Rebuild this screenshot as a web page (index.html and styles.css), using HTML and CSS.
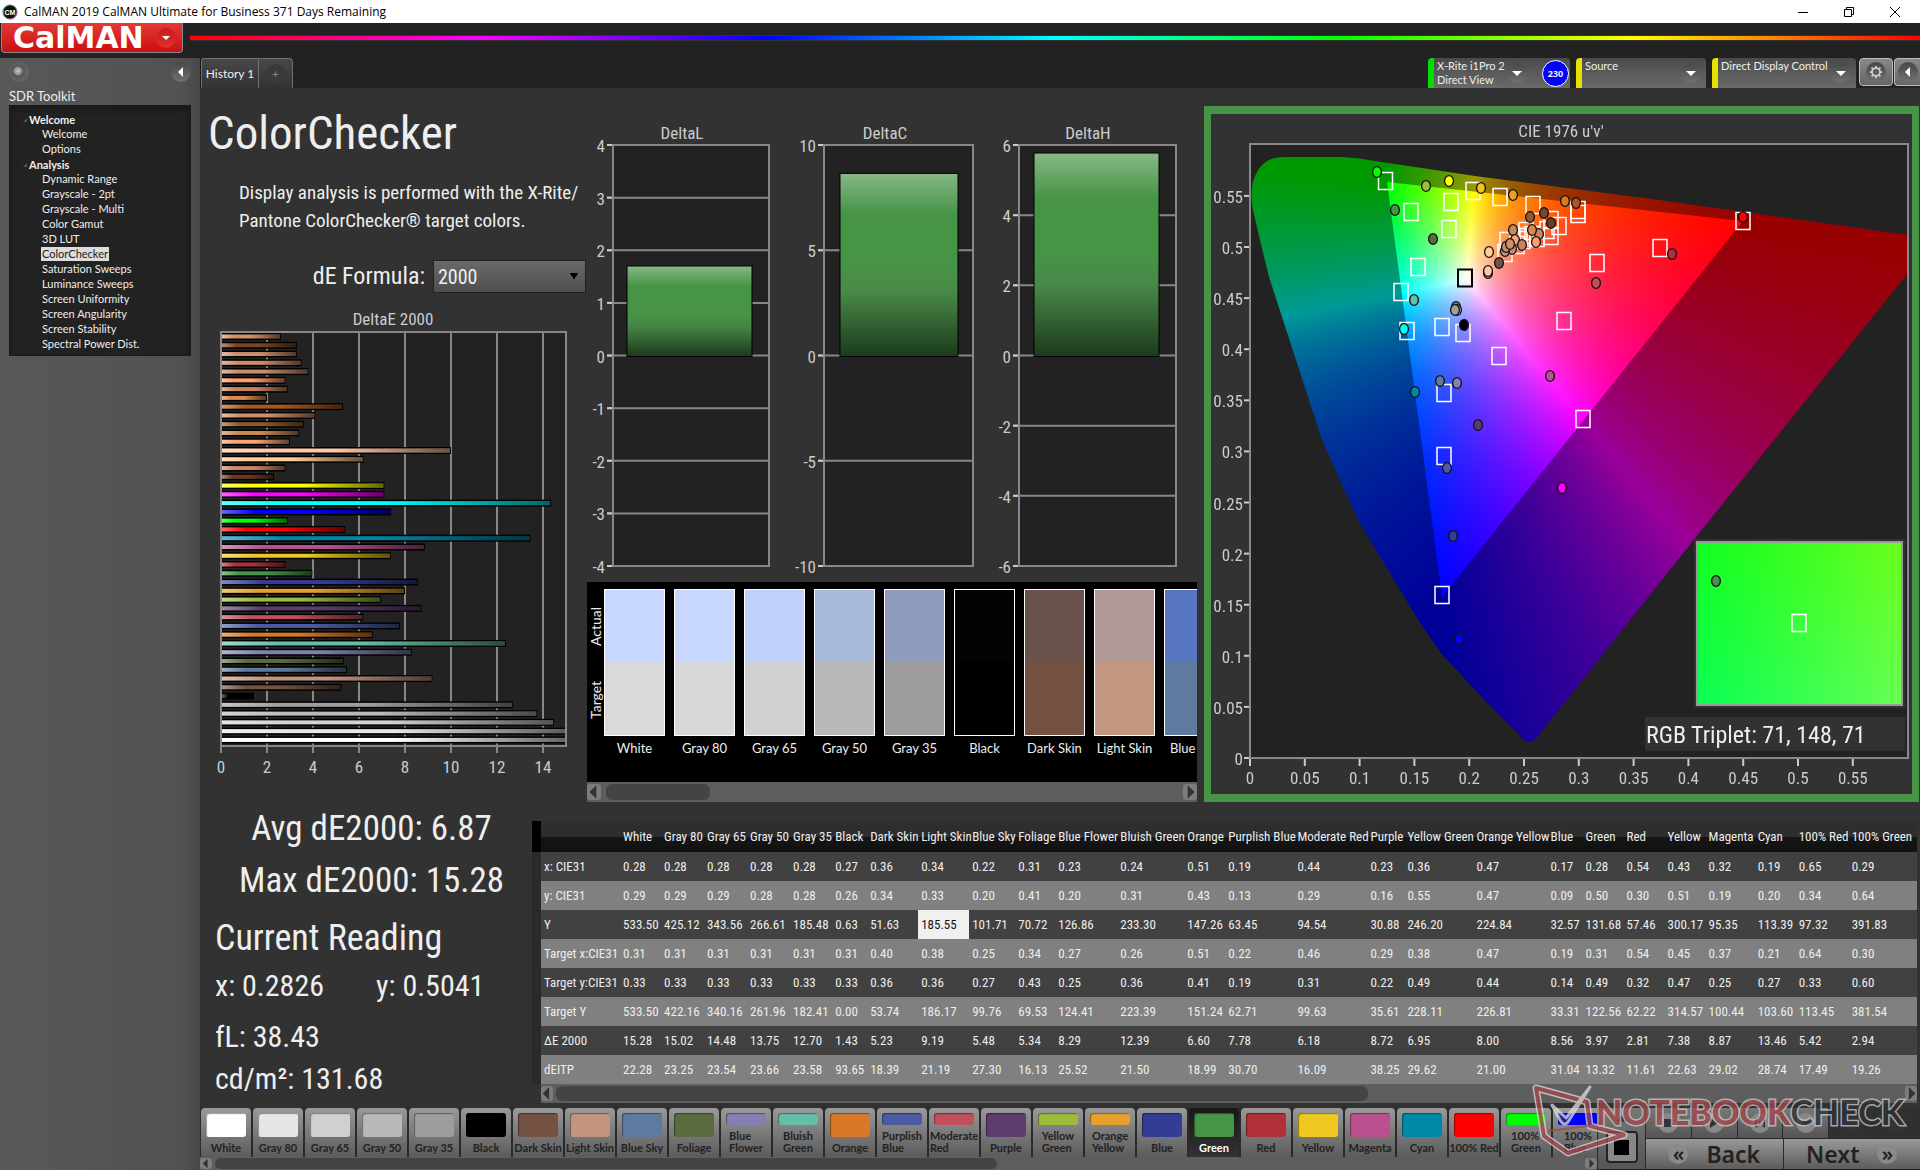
FILE: index.html
```html
<!DOCTYPE html>
<html lang="en">
<head>
<meta charset="utf-8">
<title>CalMAN 2019</title>
<link rel="stylesheet" href="styles.css">
</head>
<body>
<header class="titlebar">
  <svg class="app-icon" viewBox="0 0 16 16"><circle cx="8" cy="8" r="7" fill="#111" stroke="#5a7a6a" stroke-width="1"/><path d="M1 8a7 7 0 0 1 5-6.700" stroke="#3c9" fill="none"/><path d="M15 8a7 7 0 0 1-7 7" stroke="#c4c" fill="none"/><text x="8" y="11" text-anchor="middle" font-size="7" font-weight="700" fill="#fff">CM</text></svg>
  <span class="titlebar-text">CalMAN 2019 CalMAN Ultimate for Business 371 Days Remaining</span>
  <button class="win" aria-label="Minimize"><svg viewBox="0 0 12 12"><path d="M1 6.500h10" /></svg></button>
  <button class="win" aria-label="Restore"><svg viewBox="0 0 12 12"><path d="M1.500 3.500h7v7h-7zM3.500 3v-1.500h7v7h-2"/></svg></button>
  <button class="win" aria-label="Close"><svg viewBox="0 0 12 12"><path d="M1 1l10 10M11 1l-10 10"/></svg></button>
</header>
<div class="brandbar">
  <button class="brand"><span>CalMAN</span><i class="knob red"><svg viewBox="0 0 10 10"><path d="M1 3h8l-4 4z"/></svg></i></button>
  <div class="rainbow"></div>
</div>
<div class="shell">
  <aside class="sidebar">
    <div class="side-top"><i class="knob dot"></i><button class="knob" aria-label="Collapse"><svg viewBox="0 0 10 10"><path d="M7 0v10l-5-5z"/></svg></button></div>
    <h2>SDR Toolkit</h2>
    <nav class="tree">
      <h3>Welcome</h3>
      <a href="#">Welcome</a><a href="#">Options</a>
      <h3>Analysis</h3>
      <a href="#">Dynamic Range</a><a href="#">Grayscale - 2pt</a><a href="#">Grayscale - Multi</a><a href="#">Color Gamut</a><a href="#">3D LUT</a><a href="#" class="on">ColorChecker</a><a href="#">Saturation Sweeps</a><a href="#">Luminance Sweeps</a><a href="#">Screen Uniformity</a><a href="#">Screen Angularity</a><a href="#">Screen Stability</a><a href="#">Spectral Power Dist.</a>
    </nav>
  </aside>
  <main class="main">
    <div class="tabbar">
      <button class="tab">History 1</button><button class="tab add"><i class="knob">+</i></button>
      <div class="devices">
        <button class="device meter"><span>X-Rite i1Pro 2<br>Direct View</span><i class="knob"><svg viewBox="0 0 10 10"><path d="M0 3h10l-5 5z"/></svg></i><b class="badge">230</b></button>
        <button class="device"><span>Source</span><i class="knob"><svg viewBox="0 0 10 10"><path d="M0 3h10l-5 5z"/></svg></i></button>
        <button class="device"><span>Direct Display Control</span><i class="knob"><svg viewBox="0 0 10 10"><path d="M0 3h10l-5 5z"/></svg></i></button>
        <button class="tool" aria-label="Settings"><i class="knob"><svg class="gear" viewBox="0 0 16 16"><circle cx="8" cy="8" r="4.500" fill="none" stroke="#ccc" stroke-width="2"/><path d="M8 1v3M8 12v3M1 8h3M12 8h3M3 3l2 2M11 11l2 2M13 3l-2 2M5 11l-2 2" stroke="#ccc" stroke-width="2"/></svg></i></button>
        <button class="tool last" aria-label="Collapse"><i class="knob"><svg viewBox="0 0 10 10"><path d="M7 0v10l-5-5z"/></svg></i></button>
      </div>
    </div>
    <div class="charts">
      <section class="intro">
        <h1>ColorChecker</h1>
        <p>Display analysis is performed with the X-Rite/<br>Pantone ColorChecker® target colors.</p>
        <div class="formula"><label for="formula">dE Formula:</label><select id="formula"><option>2000</option></select></div>
        <svg class="bars" id="deltaE" viewBox="0 0 378 476"></svg>
      </section>
      <section class="deltas">
        <div class="delta-row"><svg id="deltaL" viewBox="0 0 190 470"></svg><svg id="deltaC" viewBox="0 0 207 470"></svg><svg id="deltaH" viewBox="0 0 213 470"></svg></div>
        <div class="compare">
          <div class="compare-body"><div class="sides"><span>Actual</span><span>Target</span></div><div class="swatches" id="swatches"></div></div>
          <div class="scroll big"><button aria-label="Left"><svg viewBox="0 0 10 14"><path d="M7 1v12l-6-6z"/></svg></button><i class="thumb t1"></i><button aria-label="Right"><svg viewBox="0 0 10 14"><path d="M3 1v12l6-6z"/></svg></button></div>
        </div>
      </section>
      <section class="cie"><canvas id="gamut" width="701" height="680"></canvas><svg id="cie" viewBox="0 0 701 680"></svg></section>
    </div>
    <div class="results">
      <section class="scores">
        <p class="avg">Avg dE2000: 6.87</p><p class="avg">Max dE2000: 15.28</p>
        <h2>Current Reading</h2>
        <p class="xy"><span>x: 0.2826</span><span>y: 0.5041</span></p><p class="fl">fL: 38.43</p><p class="cd">cd/m²: 131.68</p>
      </section>
      <section class="grid">
        <div class="strip"></div>
        <div class="grid-body"><div class="clip"><table id="data"></table></div>
        <div class="scroll"><button aria-label="Left"><svg viewBox="0 0 10 14"><path d="M7 1v12l-6-6z"/></svg></button><i class="thumb t2"></i><button aria-label="Right"><svg viewBox="0 0 10 14"><path d="M3 1v12l6-6z"/></svg></button></div></div>
      </section>
    </div>
    <footer class="footer">
      <div class="patches"><div class="patch-row" id="patches"></div>
      <div class="scroll thin"><button aria-label="Left"><svg viewBox="0 0 10 14"><path d="M7 1v12l-6-6z"/></svg></button><i class="thumb t3"></i><button aria-label="Right"><svg viewBox="0 0 10 14"><path d="M3 1v12l6-6z"/></svg></button></div></div>
      <div class="pattern"><button aria-label="Up"><svg viewBox="0 0 10 10"><path d="M0 7h10l-5-5z"/></svg></button><button class="window" aria-label="Pattern window"><i></i></button></div>
      <div class="control">
        <div class="transport">
          <button aria-label="Stop"><i class="knob"><svg viewBox="0 0 10 10"><path d="M1 1h8v8h-8z"/></svg></i></button>
          <button aria-label="Play"><i class="knob"><svg viewBox="0 0 10 10"><path d="M1 0v10l8-5z"/></svg></i></button>
          <button aria-label="Read series"><i class="knob"><svg viewBox="0 0 12 10"><path d="M0 0h3v2h-1v6h1v2h-3zM12 0h-3v2h1v6h-1v2h3zM4 1v8l4-4z"/></svg></i></button>
          <button aria-label="Continuous"><i class="knob"><svg viewBox="0 0 12 10"><path d="M3 3a2 2 0 1 0 0 4c2 0 4-4 6-4a2 2 0 1 1 0 4c-2 0-4-4-6-4z" fill="none" stroke="#333" stroke-width="1.500"/></svg></i></button>
          <button class="off" aria-label="Refresh"><i class="knob"></i></button><button class="off" aria-label="More"><i class="knob"></i></button>
        </div>
        <div class="nav"><button><i class="knob">«</i>Back</button><button>Next<i class="knob">»</i></button></div>
      </div>
      <svg class="watermark" viewBox="0 0 400 95">
        <g stroke-linejoin="round" fill="none"><path d="M16 14L67 28L70 52L104 61L48 79L24 62Z" stroke="#ddd" stroke-width="7"/><path d="M16 14L67 28L70 52L104 61L48 79L24 62Z" stroke="#a8474c" stroke-width="4"/><path d="M32 31L46 44L70 13L48 48Q44 53 40 46Z" stroke="#ddd" stroke-width="3" fill="#333"/><path d="M28 57L68 52" stroke="#a8474c" stroke-width="2"/></g>
        <text x="76" y="51"><tspan fill="#a5454b">NOTEBOOK</tspan><tspan fill="#303030" class="check">CHECK</tspan></text>
      </svg>
    </footer>
  </main>
</div>
<script src="script.js"></script>
</body>
</html>
```
FILE: styles.css
```css
* { box-sizing: border-box; margin: 0; padding: 0; }
:root { --ui: Lato, "Liberation Sans", sans-serif; --narrow: "Roboto Condensed", Carlito, Lato, sans-serif; }
body { display: flex; flex-direction: column; min-height: 100vh; background: #222; color: #eee; font: 12px/14px var(--ui); overflow-x: hidden; }
button { border: 0; background: none; color: inherit; font: inherit; }
i { font-style: normal; }
svg { display: block; }
a { color: inherit; text-decoration: none; }

.titlebar { display: flex; align-items: center; height: 23px; padding: 0 2px; background: #fff; color: #000; }
.app-icon { width: 16px; height: 16px; margin-right: 6px; font-family: "Liberation Sans", sans-serif; }
.titlebar-text { flex: 1; font: 12px/16px "Open Sans", sans-serif; }
.win { width: 46px; height: 20px; display: grid; place-items: center; }
.win svg { width: 12px; height: 12px; fill: none; stroke: #000; }

.brandbar { display: flex; height: 35px; padding-left: 1px; gap: 7px; }
.brand { width: 182px; height: 30px; display: flex; align-items: center; justify-content: space-between; padding: 0 6px 0 11px; background: linear-gradient(#e23b36, #c90f10); border: 1px solid #888; border-top: 0; border-radius: 0 0 4px 4px; color: #fff; font: bold 30px/30px "DejaVu Sans", sans-serif; }
.rainbow { flex: 1; height: 6px; margin-top: 12px; border: solid #333; border-width: 1px 0; background: linear-gradient(90deg, #f00, #f0f, #00f, #0ff, #0f0, #ff0, #f00); }

.knob { display: grid; place-items: center; flex: none; width: 20px; height: 20px; border-radius: 50%; background: linear-gradient(#484848, #707070); }
.knob svg { width: 10px; height: 10px; fill: #fff; }
.knob.red { background: linear-gradient(#c81a1a, #e03030); }
.knob.dot { background: radial-gradient(circle at 9px 9px, #ccc 0, #888 4px, #555 5px, #666 10px); }

.shell { display: flex; flex: 1; }
.sidebar { width: 200px; flex: none; padding: 4px 9px; background: linear-gradient(90deg, #585858, #525252 90%, #484848); }
.side-top { display: flex; justify-content: space-between; height: 26px; }
.sidebar h2 { font: 13px/16px var(--ui); margin-bottom: 1px; }
.tree { height: 251px; padding: 6px 0 0 19px; background: #222; border: 1px solid #1a1a1a; font-size: 11px; line-height: 15px; box-shadow: inset 0 4px 6px #191919; }
.tree h3 { position: relative; font: bold 11px/15px var(--ui); }
.tree h3::before { content: ""; position: absolute; left: -10px; top: 6px; border: solid transparent; border-width: 4px 0 0 4px; border-bottom: 0; border-right: 4px solid #555; }
.tree a { display: block; width: max-content; margin-left: 12px; padding: 0 1px; line-height: 14px; margin-bottom: 1px; }
.tree .on { background: #ddd; color: #222; }

.main { position: relative; flex: 1; min-width: 0; display: flex; flex-direction: column; background: #323232; }
.tabbar { display: flex; height: 30px; background: #222; border-left: 1px solid #1a1a1a; }
.tab { width: 58px; background: linear-gradient(#484848, #333); border: 1px solid #707070; border-bottom: 0; border-radius: 3px 0 0 0; font-size: 12px; }
.tab.add { width: 34px; display: grid; place-items: center; border-left: 0; border-radius: 0 4px 0 0; }
.tab .knob { background: #3a3a3a; color: #888; }
.devices { display: flex; margin-left: auto; font-size: 11px; }
.device { display: flex; align-items: center; width: 130px; margin-right: 6px; padding: 0 5px 0 3px; border-left: 6px solid #e8e000; border-radius: 4px 4px 0 0; background: linear-gradient(#4a4a4a, #6a6a6a); text-align: left; }
.device:nth-child(3) { width: 144px; margin-right: 3px; }
.device span { flex: 1; align-self: flex-start; padding-top: 1px; white-space: nowrap; }
.device.meter { width: 142px; border-left-color: #0d0; padding-right: 1px; }
.badge { width: 27px; height: 27px; margin-left: 15px; border: 1px solid #fff; border-radius: 50%; background: #00f; font: bold 9px/25px "Open Sans", sans-serif; text-align: center; }
.tool { width: 34px; height: 28px; display: grid; place-items: center; border: 1px solid #bbb; border-radius: 4px; background: linear-gradient(#888, #666); margin-right: 1px; }
.tool.last { width: 26px; margin: 0; border-right: 0; border-radius: 4px 0 0 4px; }
.knob .gear { width: 14px; height: 14px; }

.charts { display: grid; grid-template-columns: 387px 617fr 715fr; padding-right: 1px; height: 714px; }
.intro { padding: 19px 0 0 8px; }
.intro h1 { font: 47px/52px var(--narrow); }
.intro p { margin: 20px 0 0 31px; font: 19px/28px var(--narrow); white-space: nowrap; }
.formula { display: flex; justify-content: flex-end; gap: 8px; margin: 25px 1px 16px 0; font: 24px/33px var(--narrow); }
.formula select { appearance: none; width: 153px; height: 33px; padding-left: 4px; border: 1px solid #222; color: #eee; font: 20px/30px var(--narrow); background: conic-gradient(from -30deg at 50% 100%, #000 60deg, transparent 0) 136px 12px / 8px 7px no-repeat, linear-gradient(#6a6a6a, #4e4e4e); }
.bars { width: 378px; height: 476px; margin-left: 1px; }
.deltas { padding-top: 24px; margin-right: 7px; min-width: 0; }
.delta-row { display: grid; grid-template-columns: 190fr 207fr 213fr; height: 470px; }
.delta-row svg { width: 100%; height: 470px; }
.charts svg text { font-family: var(--narrow); }
.compare { height: 220px; background: #000; }
.compare-body { display: flex; height: 200px; overflow: hidden; }
.sides { width: 17px; flex: none; display: flex; flex-direction: column; padding-top: 7px; }
.sides span { height: 74px; writing-mode: vertical-rl; transform: rotate(180deg); text-align: center; font: 14px/17px var(--ui); }
.swatches { display: flex; gap: 9px; padding-top: 7px; overflow: hidden; }
.swatch { flex: none; width: 61px; white-space: nowrap; text-align: center; font: 13px/24px var(--ui); }
.swatch i { display: block; height: 147px; border: 1px solid #fff; }

.scroll { display: flex; align-items: stretch; height: 19px; padding: 2px 0; background: #5e5e5e; }
.scroll.big { height: 20px; }
.scroll.thin { height: 13px; padding: 1px 0; }
.scroll button { flex: none; width: 12px; border-radius: 3px; background: #7c7c7c; }
.scroll button:last-child { margin-left: auto; }
.scroll.big button { width: 14px; }
.scroll svg { width: 100%; height: 100%; fill: #333; }
.thumb { display: block; margin-left: 3px; border-radius: 6px; background: #444; }
.t1 { width: 17%; margin-left: 5px; }
.t2 { width: 59%; }
.t3 { width: 56%; }

.cie { display: grid; margin-top: 18px; height: 696px; border: solid #479447; border-width: 8px 7px; }
.cie canvas, .cie svg { grid-area: 1 / 1; width: 100%; height: 680px; }

.results { display: flex; height: 306px; }
.scores { width: 332px; flex: none; font-family: var(--narrow); }
.scores .avg { font-size: 35px; line-height: 51px; padding: 1px 0 0 11px; text-align: center; }
.scores h2 { font-size: 36px; font-weight: 400; line-height: 48px; margin: 8px 0 0 15px; }
.scores .xy { display: flex; gap: 52px; line-height: 50px; }
.scores .xy, .scores .fl, .scores .cd { padding-left: 15px; font-size: 30px; line-height: 48px; }
.scores .fl { margin-top: 3px; }
.scores .cd { line-height: 36px; }
.grid { flex: 1; min-width: 0; display: flex; padding: 19px 3px 4px 0; }
.strip { width: 9px; background: linear-gradient(#000 31px, #2a2a2a 31px); height: 263px; }
.grid-body { flex: 1; min-width: 0; }
.clip { overflow: hidden; }
table { table-layout: fixed; border-collapse: collapse; width: 1421px; font: 13px/20px var(--narrow); }
th { font-weight: 400; text-align: left; height: 31px; white-space: nowrap; }
thead tr { background: linear-gradient(#2e2e2e 50%, #161616 50%, #111); }
tbody th, td { height: 29px; white-space: nowrap; }
th, td { padding: 0 0 0 3px; }
tbody tr { background: #414141; }
tbody tr:nth-child(even) { background: #808080; }
.sel { background: #f0f0f0; color: #111; }

.footer { position: relative; display: flex; height: 62px; border-bottom: 1px solid #222; background: #2a2a2a; }
.patches { flex: 1; min-width: 0; }
.patch-row { display: flex; gap: 2px; height: 49px; padding-left: 1px; overflow: hidden; }
.patch { flex: none; width: 50px; display: flex; flex-direction: column; align-items: center; padding-top: 5px; border-radius: 4px 4px 0 0; background: linear-gradient(#999, #5c5c5c); color: #222; font: bold 11px/12px var(--ui); text-align: left; white-space: nowrap; }
.patch i { flex: 1; width: 40px; margin-bottom: 5px; border-radius: 3px; box-shadow: inset 1px 1px 1px #0006; }
.patch span { margin-bottom: 3px; }
.patch.on { background: linear-gradient(#181818, #333); color: #fff; }
.pattern { width: 47px; margin: 0 1px; background: linear-gradient(#777, #555); display: flex; flex-direction: column; align-items: center; gap: 6px; }
.pattern button svg { width: 12px; height: 12px; fill: #333; margin-top: 5px; }
.pattern .window { width: 32px; height: 32px; display: grid; place-items: center; border: 2px solid #222; border-radius: 4px; background: #888; }
.window i { width: 15px; height: 15px; background: #000; }
.control { width: 274px; }
.transport, .nav { display: flex; gap: 1px; height: 30px; }
.transport button { flex: 1; display: grid; place-items: center; background: linear-gradient(#777, #555); }
.transport .off { background: #303030; }
.transport .off .knob { background: #333; }
.transport .knob { background: #888; }
.transport .knob svg { fill: #333; }
.nav { margin-top: 1px; }
.nav button { flex: 1; display: flex; align-items: center; justify-content: center; gap: 18px; background: linear-gradient(#999, #5c5c5c); color: #222; font: 600 23px/30px "Noto Sans", sans-serif; }
.nav .knob { background: #8a8a8a; font-size: 20px; line-height: 16px; }
.watermark { position: absolute; right: 0; bottom: 0; width: 400px; height: 95px; opacity: .75; }
.watermark text { font: 900 34px Lato, sans-serif; stroke: #ccc; stroke-width: 3px; paint-order: stroke; }
.watermark .check { font-weight: 700; }
```
FILE: script.js
```js
const NS = 'http://www.w3.org/2000/svg';
const $ = id => document.getElementById(id);
function add(svg, tag, attrs, text) {
  const e = document.createElementNS(NS, tag);
  for (const k in attrs) e.setAttribute(k, attrs[k]);
  if (text !== undefined) e.textContent = text;
  svg.appendChild(e);
  return e;
}
const line = (s, x1, y1, x2, y2, c, w) => add(s, 'path', { d: `M${x1} ${y1}L${x2} ${y2}`, stroke: c, 'stroke-width': w || 2 });
const label = (s, x, y, t, anchor, size) => add(s, 'text', { x, y, 'text-anchor': anchor || 'middle', 'font-size': size || 17, fill: '#ccc' }, t);
function gradient(svg, id, vertical, stops) {
  const g = add(svg, 'linearGradient', vertical ? { id, x1: 0, y1: 0, x2: 0, y2: 1 } : { id });
  stops.forEach(([o, c, a]) => add(g, 'stop', { offset: o, 'stop-color': c, 'stop-opacity': a }));
}

// DeltaE 2000 per patch, top to bottom
const deltaE = [[2.6,'#d98f62'],[3.3,'#7a4524'],[3.3,'#cf8f6b'],[3.5,'#cd8c6a'],[3.8,'#c58e6c'],[2.8,'#ff9c72'],[2.9,'#cc8466'],[2,'#d98850'],[5.3,'#a9571f'],[4.1,'#cf8f6e'],[3.6,'#8f5a30'],[3.4,'#c98a58'],[3,'#f7a478'],[10,'#ffc7a8'],[6.2,'#ffcb98'],[2.8,'#cc8664'],[2.3,'#6f3a22'],[7.1,'#ffff00'],[7.1,'#ff00ff'],[14.35,'#00ffff'],[7.4,'#0000ff'],[2.9,'#00ff00'],[5.4,'#ff0000'],[13.46,'#0088a8'],[8.87,'#bb5090'],[7.38,'#eec81f'],[2.81,'#af303a'],[3.97,'#479447'],[8.56,'#343c96'],[8,'#e6a02c'],[6.95,'#9dbc3c'],[8.72,'#5d3d6c'],[6.18,'#c2505c'],[7.78,'#4a5ba4'],[6.6,'#d87828'],[12.39,'#66bda8'],[8.29,'#8480b4'],[5.34,'#5a6b40'],[5.48,'#5e7a9c'],[9.19,'#c39580'],[5.23,'#735242'],[1.43,'#000000'],[12.7,'#9e9e9e'],[13.75,'#bababa'],[14.48,'#d2d2d2'],[15,'#e8e8e8'],[15,'#ffffff']];
(function () {
  const s = $('deltaE'), x0 = 12, y0 = 23, w = 345, h = 414;
  gradient(s, 'shine', false, [[0, '#fff', .4], [.2, '#fff', 0], [.5, '#000', 0], [1, '#000', .6]]);
  label(s, 184, 16, 'DeltaE 2000');
  add(s, 'rect', { x: x0, y: y0, width: w, height: h, fill: '#222' });
  for (let v = 0; v < 15; v += 2) {
    const x = x0 + v * 23;
    line(s, x, y0, x, y0 + h + 7, '#888');
    label(s, x, y0 + h + 27, v);
  }
  deltaE.forEach(([v, c], i) => {
    const y = y0 + 1 + i * 8.77, bw = v * 23;
    add(s, 'rect', { x: x0, y, width: bw, height: 7, fill: '#000' });
    add(s, 'rect', { x: x0 + 1, y: y + 1.5, width: bw - 2, height: 4, fill: c });
    add(s, 'rect', { x: x0 + 1, y: y + 1.5, width: bw - 2, height: 4, fill: 'url(#shine)' });
  });
  add(s, 'rect', { x: x0, y: y0, width: w, height: h, fill: 'none', stroke: '#888', 'stroke-width': 2 });
})();

function delta(id, title, x0, x1, tx, max, step, value, bx, bw) {
  const s = $(id), y0 = 33, h = 421, mid = y0 + h / 2 + 1;
  gradient(s, id + 'g', true, [[0, '#86b886', 1], [.22, '#479447', 1], [.5, '#479447', 1], [.65, '#488848', 1], [1, '#1c3a1c', 1]]);
  label(s, tx, 27, title);
  add(s, 'rect', { x: x0, y: y0, width: x1 - x0, height: h, fill: '#222' });
  for (let v = max; v >= -max; v -= step) {
    const y = y0 + (max - v) * h / (2 * max);
    line(s, x0 - 6, y, x1, y, '#888');
    line(s, x0 - 6, y, x0, y, '#ccc');
    label(s, x0 - 8, y + 7, v, 'end');
  }
  const top = mid - value / max * h / 2;
  add(s, 'rect', { x: bx, y: top, width: bw, height: mid - top, fill: `url(#${id}g)`, stroke: '#000' });
  add(s, 'rect', { x: x0, y: y0, width: x1 - x0, height: h, fill: 'none', stroke: '#888', 'stroke-width': 2 });
}
delta('deltaL', 'DeltaL', 26, 182, 95, 4, 1, 1.72, 40, 125);
delta('deltaC', 'DeltaC', 47, 196, 108, 10, 5, 8.7, 63, 118);
delta('deltaH', 'DeltaH', 35, 192, 104, 6, 2, 5.8, 50, 125);

[['White','#c8d7ff','#d9d9d9'],['Gray 80','#c8d7ff','#d8d8d8'],['Gray 65','#c1d0fa','#d0d0d0'],['Gray 50','#a9b9dc','#b9b9b9'],['Gray 35','#909cbc','#9d9d9d'],['Black','#030305','#000'],['Dark Skin','#69524c','#735242'],['Light Skin','#b39898','#c39680'],['Blue Sky','#5676c0','#5e7a9e']].forEach(([n, a, t]) => {
  $('swatches').insertAdjacentHTML('beforeend', `<div class="swatch"><i style="background:linear-gradient(${a} 50%,${t} 50%)"></i>${n}</div>`);
});

// CIE 1976 u'v' diagram; marker positions are in plot pixels
function rgbAt(u, v) {
  const d = 6 * u - 16 * v + 12, x = 9 * u / d, y = 4 * v / d;
  const X = x / y, Z = (1 - x - y) / y;
  let c = [3.2406 * X - 1.5372 - .4986 * Z, -.9689 * X + 1.8758 + .0415 * Z, .0557 * X - .204 + 1.057 * Z].map(n => Math.max(0, n));
  const m = Math.max(...c);
  return c.map(n => n / m * 255);
}
const PX = 39, PY = 30, PW = 658, PH = 614;
function shade(ctx, x, y, w, h, map, gain) {
  const off = document.createElement('canvas');
  off.width = w; off.height = h;
  const o = off.getContext('2d'), img = o.createImageData(w, h);
  for (let j = 0, k = 0; j < h; j++) for (let i = 0; i < w; i++, k += 4) {
    const c = rgbAt(...map(i, j));
    img.data[k] = c[0] * gain; img.data[k + 1] = c[1] * gain; img.data[k + 2] = c[2] * gain; img.data[k + 3] = 255;
  }
  o.putImageData(img, 0, 0);
  ctx.drawImage(off, x, y);
}
(function () {
  const ctx = $('gamut').getContext('2d');
  ctx.fillStyle = '#323232'; ctx.fillRect(0, 0, 701, 680);
  ctx.fillStyle = '#222'; ctx.fillRect(PX, PY, PW, PH);
  const uv = (i, j) => [i / 1095, Math.max(.001, (PH - j) / 1022)];
  const locus = new Path2D('M279 598Q274 598 269 590Q246 569 225 546L191 509Q170 480 152 449Q128 410 108 376L72 296L46 216L33 176L19 133L10 96L3 66Q0 50 3 38Q10 13 33 13L92 13Q110 14 125 17L225 32L409 56L658 91L658 129L508 316L446 393L288 592Q284 598 279 598Z');
  const tri = new Path2D('M493 77L137 38L192 453Z');
  ctx.save(); ctx.translate(PX, PY); ctx.clip(locus); shade(ctx, 0, 0, PW, PH, uv, .6); ctx.restore();
  ctx.save(); ctx.translate(PX, PY); ctx.clip(tri); shade(ctx, 0, 0, PW, PH, uv, 1); ctx.restore();
  ctx.fillStyle = '#323232'; ctx.fillRect(483, 425, 211, 169); ctx.fillRect(434, 603, 260, 34);
  shade(ctx, 486, 428, 205, 163, (i, j) => [.134 + i * .030 / 205, .544 - j * .0240 / 163], 1);
})();
(function () {
  const s = $('cie');
  label(s, 350, 23, "CIE 1976 u'v'");
  for (let i = 0; i < 12; i++) {
    const t = String(+(i * .05).toFixed(2));
    line(s, PX + i * 54.8, PY + PH, PX + i * 54.8, PY + PH + 8, '#ccc');
    label(s, PX + i * 54.8, PY + PH + 26, t);
    line(s, PX - 6, PY + PH - i * 51.1, PX, PY + PH - i * 51.1, '#ccc');
    label(s, PX - 7, PY + PH + 7 - i * 51.1, t, 'end');
  }
  add(s, 'rect', { x: PX, y: PY, width: PW, height: PH, fill: 'none', stroke: '#888', 'stroke-width': 2 });
  add(s, 'rect', { x: 486, y: 428, width: 205, height: 163, fill: 'none', stroke: '#999', 'stroke-width': 2 });
  label(s, 435, 629, 'RGB Triplet: 71, 148, 71', 'start', 24).setAttribute('fill', '#eee');
  const box = (x, y, c, w) => add(s, 'rect', { x: x - 7, y: y - 8.5, width: 14, height: 17, fill: 'none', stroke: c || '#fff', 'stroke-width': w || 1.5 });
  const dot = (x, y, c) => add(s, 'ellipse', { cx: x, cy: y, rx: 4.4, ry: 5.4, fill: c, stroke: '#111', 'stroke-width': 1.3 });
  [[135.5,37],[161,68],[201,58],[223,47],[250,53],[283,61],[199,85],[168,123],[151,148],[157,187],[192,183],[213,189],[249,212],[314,177],[347,119],[410,104],[493,77],[328,66],[328,70],[194,249],[333,275],[194,312],[192,451],[301,76],[309,82],[301,92],[297,86],[287,94],[282,91],[276,87],[277,93],[273,96],[267,101],[257,97],[255,109],[270,93]].forEach(([x, y]) => box(PX + x, PY + y));
  box(PX + 215, PY + 134, '#000', 2);
  [[127,28,'#0f0'],[145,66,'#479447'],[176,42,'#9dbc3c'],[199,37,'#ff0'],[231,44,'#eec81f'],[263,51,'#e6a02c'],[315,57,'#d87828'],[326,59,'#a9571f'],[294,69,'#7a4524'],[280,73,'#8f5a30'],[301,79,'#6f3a22'],[263,86,'#c98a58'],[289,90,'#cc8464'],[282,86,'#d98850'],[286,98,'#ff9c72'],[265,96,'#f7a478'],[272,101,'#cc8466'],[262,105,'#c58e6c'],[255,107,'#c39580'],[256,103,'#cd8c6a'],[260,100,'#cf8f6b'],[239,108,'#ffcb98'],[249,119,'#735242'],[238,129,'#c39580'],[238,127,'#ffc7a8'],[183,95,'#5a6b40'],[164,156,'#66bda8'],[206,163,'#777'],[207,166,'#bbb'],[205,166,'#9e9e9e'],[214,181,'#000'],[154,185,'#0ff'],[190,237,'#5e7a9c'],[207,239,'#8480b4'],[165,248,'#0088a8'],[228,281,'#5d3d6c'],[300,232,'#bb5090'],[346,139,'#c2505c'],[422,110,'#af303a'],[493,73,'#f00'],[197,324,'#4a5ba4'],[312,344,'#f0f'],[203,392,'#343c96'],[209,495,'#00f']].forEach(([x, y, c]) => dot(PX + x, PY + y, c));
  box(588, 509); dot(505, 467, '#479447');
})();

const cols = 'White,Gray 80,Gray 65,Gray 50,Gray 35,Black,Dark Skin,Light Skin,Blue Sky,Foliage,Blue Flower,Bluish Green,Orange,Purplish Blue,Moderate Red,Purple,Yellow Green,Orange Yellow,Blue,Green,Red,Yellow,Magenta,Cyan,100% Red,100% Green,100% Blue'.split(',');
const widths = [79,41,43,43,43,42,35,51,51,46,40,62,67,41,69,73,37,69,74,35,41,41,41,49,41,53,65,48];
const rows = {
  'x: CIE31': '0.28 0.28 0.28 0.28 0.28 0.27 0.36 0.34 0.22 0.31 0.23 0.24 0.51 0.19 0.44 0.23 0.36 0.47 0.17 0.28 0.54 0.43 0.32 0.19 0.65 0.29 0.15',
  'y: CIE31': '0.29 0.29 0.29 0.28 0.28 0.26 0.34 0.33 0.20 0.41 0.20 0.31 0.43 0.13 0.29 0.16 0.55 0.47 0.09 0.50 0.30 0.51 0.19 0.20 0.34 0.64 0.04',
  'Y': '533.50 425.12 343.56 266.61 185.48 0.63 51.63 185.55 101.71 70.72 126.86 233.30 147.26 63.45 94.54 30.88 246.20 224.84 32.57 131.68 57.46 300.17 95.35 113.39 97.32 391.83 38.40',
  'Target x:CIE31': '0.31 0.31 0.31 0.31 0.31 0.31 0.40 0.38 0.25 0.34 0.27 0.26 0.51 0.22 0.46 0.29 0.38 0.47 0.19 0.31 0.54 0.45 0.37 0.21 0.64 0.30 0.15',
  'Target y:CIE31': '0.33 0.33 0.33 0.33 0.33 0.33 0.36 0.36 0.27 0.43 0.25 0.36 0.41 0.19 0.31 0.22 0.49 0.44 0.14 0.49 0.32 0.47 0.25 0.27 0.33 0.60 0.06',
  'Target Y': '533.50 422.16 340.16 261.96 182.41 0.00 53.74 186.17 99.76 69.53 124.41 223.39 151.24 62.71 99.63 35.61 228.11 226.81 33.31 122.56 62.22 314.57 100.44 103.60 113.45 381.54 38.51',
  'ΔE 2000': '15.28 15.02 14.48 13.75 12.70 1.43 5.23 9.19 5.48 5.34 8.29 12.39 6.60 7.78 6.18 8.72 6.95 8.00 8.56 3.97 2.81 7.38 8.87 13.46 5.42 2.94 7.40',
  'dEITP': '22.28 23.25 23.54 23.66 23.58 93.65 18.39 21.19 27.30 16.13 25.52 21.50 18.99 30.70 16.09 38.25 29.62 21.00 31.04 13.32 11.61 22.63 29.02 28.74 17.49 19.26 24.10'
};
$('data').innerHTML = '<colgroup>' + widths.map(w => `<col style="width:${w}px">`).join('') + '</colgroup><thead><tr><th></th>' + cols.map(c => `<th>${c}</th>`).join('') + '</tr></thead><tbody>' +
  Object.entries(rows).map(([k, v]) => `<tr><th>${k}</th>` + v.split(' ').map(n => `<td${n === '185.55' ? ' class="sel"' : ''}>${n}</td>`).join('') + '</tr>').join('') + '</tbody>';

const fills = '#fff,#e6e6e6,#d0d0d0,#b9b9b9,#9d9d9d,#000,#735242,#c39580,#5e7a9e,#5a6b40,#8480b4,#66bda8,#d87828,#4a5ba4,#c2505c,#5d3d6c,#9dbc3c,#e6a02c,#343c96,#479447,#af303a,#eec81f,#bb5090,#0088a8,#f00,#0f0,#00f'.split(',');
cols.forEach((c, i) => {
  const two = [10, 11, 13, 14, 16, 17, 25, 26].includes(i);
  $('patches').insertAdjacentHTML('beforeend', `<button class="patch${c === 'Green' ? ' on' : ''}"><i style="background:${fills[i]}"></i><span>${two ? c.replace(' ', '<br>') : c}</span></button>`);
});
```
